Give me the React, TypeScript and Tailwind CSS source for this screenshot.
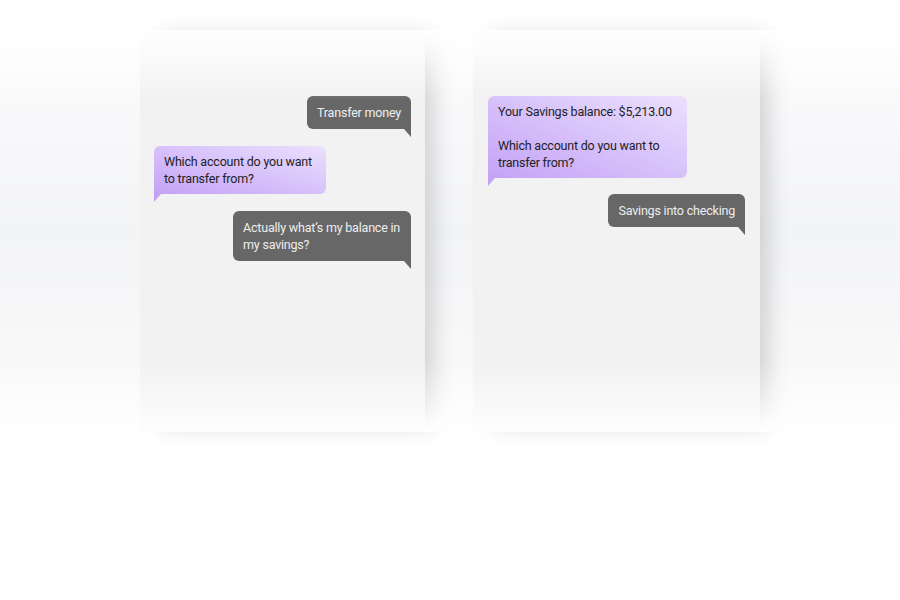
import React from "react";

const font = { fontFamily: "Roboto, 'Noto Sans', sans-serif" };

const UserBubble: React.FC<{ children: React.ReactNode; className?: string }> = ({ children, className = "" }) => (
  <div className={`relative self-end ${className}`}>
    <div className="rounded-md rounded-br-none bg-[#676767] px-[10px] py-[8px] text-[12.5px] leading-[17px] tracking-[-0.2px] text-[#eeeeee]">
      {children}
    </div>
    <div className="absolute right-0 top-full h-[8px] w-[7px] bg-[#676767] [clip-path:polygon(0_0,100%_0,100%_100%)]" />
  </div>
);

const BotBubble: React.FC<{ children: React.ReactNode; className?: string }> = ({ children, className = "" }) => (
  <div className={`relative self-start ${className}`}>
    <div className="rounded-md rounded-bl-none bg-linear-to-bl from-[#ebe0fd] to-[#c4a2f6] px-[10px] py-[7px] text-[12.5px] leading-[17px] tracking-[-0.2px] text-[#1e1e24]">
      {children}
    </div>
    <div className="absolute left-0 top-full h-[8px] w-[7px] bg-[#c4a2f6] [clip-path:polygon(0_0,100%_0,0_100%)]" />
  </div>
);

export default function App() {
  return (
    <div className="h-[600px] w-[900px] overflow-hidden bg-white" style={font}>
      <div className="relative mt-[30px] flex h-[402px] bg-linear-to-b from-[#fcfcfd] via-[#f3f4f6] to-[#fbfbfb]">
        <div className="ml-[140px] flex w-[285px] flex-col bg-[#f2f2f3] px-[14px] pt-[66px] shadow-[14px_0_22px_-6px_rgba(0,0,0,0.16)]">
          <UserBubble>Transfer money</UserBubble>
          <BotBubble className="mt-[17px] w-[172px]">Which account do you want to transfer from?</BotBubble>
          <UserBubble className="mt-[17px] w-[178px]">Actually what’s my balance in my savings?</UserBubble>
        </div>
        <div className="ml-[48px] flex w-[287px] flex-col bg-[#f2f2f3] px-[15px] pt-[66px] shadow-[14px_0_22px_-6px_rgba(0,0,0,0.16)]">
          <BotBubble className="w-[199px]">
            Your Savings balance: $5,213.00
            <br />
            <br />
            Which account do you want to transfer from?
          </BotBubble>
          <UserBubble className="mt-[16px] whitespace-nowrap">Savings into checking</UserBubble>
        </div>
        <div className="pointer-events-none absolute inset-x-0 top-0 h-[70px] bg-linear-to-b from-white to-transparent" />
        <div className="pointer-events-none absolute inset-x-0 bottom-0 h-[70px] bg-linear-to-t from-white/90 to-transparent" />
      </div>
    </div>
  );
}
